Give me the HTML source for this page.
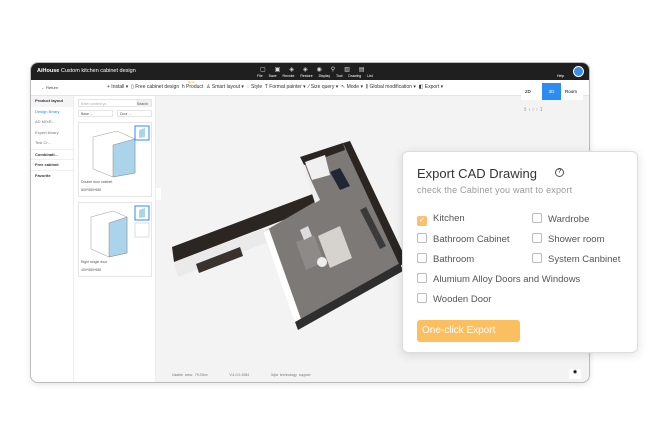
<!DOCTYPE html>
<html><head><style>
*{margin:0;padding:0;box-sizing:border-box}
body{width:660px;height:444px;background:#fff;font-family:"Liberation Sans",sans-serif;position:relative;overflow:hidden}
.frame{position:absolute;left:30px;top:62px;width:560px;height:321px;border:1px solid #bbb;border-radius:8px;overflow:hidden;background:#f3f3f3;box-shadow:0 2px 6px rgba(0,0,0,.1)}
.hdr{position:absolute;left:0;top:0;width:100%;height:17px;background:#1f1f1f;color:#fff}
.tb{position:absolute;left:0;top:17px;width:100%;height:16px;background:#fff;border-bottom:1px solid #e5e5e5;font-size:4px;color:#444}
.side{position:absolute;left:0;top:33px;width:43px;bottom:0;background:#fff;border-right:1px solid #eee;font-size:4px;color:#333}
.side div{height:10.5px;line-height:10.5px;padding-left:4px}
.panel{position:absolute;left:43px;top:33px;width:82px;bottom:0;background:#fff;border-right:1px solid #eee;font-size:3.5px;color:#555}
.t{position:absolute;white-space:nowrap}
.card{position:absolute;left:4px;width:74px;border:1px solid #e5e5e5;background:#fff}
.dlg{position:absolute;left:402px;top:151px;width:236px;height:202px;background:#fff;border:1px solid #ddd;border-radius:6px;box-shadow:0 2px 10px rgba(0,0,0,.12)}
.cb{position:absolute;font-size:9.5px;color:#555;white-space:nowrap}
.cb i{display:inline-block;width:10px;height:10px;border:1px solid #bbb;border-radius:2px;vertical-align:-1px;margin-right:6px;background:#fff}
</style></head><body>
<div class="frame">
 <div class="hdr">
  <span class="t" style="left:6px;top:5px;font-size:5.5px;font-weight:bold">AiHouse <span style="font-weight:normal">Custom kitchen cabinet design</span></span>
  <span class="t" style="left:226px;top:11px;font-size:3.5px;word-spacing:5px">File Save Revoke Restore Display Tool Drawing List</span>
  <span class="t" style="left:229px;top:3px;font-size:6px;letter-spacing:9px;color:#ddd">▢▣◈◈◉⚲▥▤</span>
  <span class="t" style="left:526px;top:11px;font-size:3.5px">Help</span>
  <div style="position:absolute;left:542px;top:3px;width:11px;height:11px;border-radius:50%;background:#3a8ee6;border:1px solid #fff"></div>
 </div>
 <div class="tb">
  <span class="t" style="left:10px;top:5px">← Return</span>
  <span class="t" style="left:76px;top:4px;font-size:5px;color:#333">+ Install ▾ &nbsp;▯ Free cabinet design &nbsp;h Product &nbsp;♙ Smart layout ▾ &nbsp;◌ Style &nbsp;T Format painter ▾ &nbsp;⁄ Size query ▾ &nbsp;↖ Mode ▾ &nbsp;⫼ Global modification ▾ &nbsp;◧ Export ▾</span>
  <span class="t" style="left:157px;top:0px;font-size:3px;color:#f5a623">New</span>
 </div>
 <div style="position:absolute;left:490px;top:20px;width:62px;height:17px;background:#fff;font-size:4.5px">
  <span class="t" style="left:4px;top:6px">2D</span>
  <div style="position:absolute;left:21px;top:0;width:19px;height:17px;background:#2d8cf0;color:#fff;text-align:center;line-height:17px">3D</div>
  <span class="t" style="left:44px;top:6px">Room</span>
 </div>
 <span class="t" style="left:492px;top:44px;font-size:5px;color:#999">↥ ‹ ○ › ↧</span>
 <div class="side">
  <div style="font-weight:bold;background:#f5f5f5">Product layout</div>
  <div style="color:#2d8cf0">Design library</div>
  <div style="color:#777">AD MIXR...</div>
  <div style="color:#777">Expert library</div>
  <div style="color:#777">Test Cr...</div>
  <div style="font-weight:bold;border-top:1px solid #eee">Combinati...</div>
  <div style="font-weight:bold;border-top:1px solid #eee">Free cabinet</div>
  <div style="font-weight:bold;border-top:1px solid #eee">Favorite</div>
 </div>
 <div class="panel">
  <div style="position:absolute;left:4px;top:3px;width:74px;height:8px;border:1px solid #e5e5e5"><span class="t" style="left:2px;top:1.5px;color:#aaa">Enter content yo</span><span class="t" style="right:0;top:0;height:7px;width:15px;background:#f0f0f0;padding:1.5px 1px">Search</span></div>
  <div style="position:absolute;left:4px;top:14px;width:35px;height:7px;border:1px solid #e5e5e5;padding:1px 2px">Base ...</div>
  <div style="position:absolute;left:43px;top:14px;width:35px;height:7px;border:1px solid #e5e5e5;padding:1px 2px">Door ...</div>
  <div class="card" style="top:26px;height:75px">
   <svg width="74" height="55" style="position:absolute;left:0;top:0"><polygon points="14,14 38,8 56,16 56,50 34,54 14,46" fill="#fff" stroke="#999" stroke-width=".5"/><polygon points="34,22 56,16 56,50 34,54" fill="#a9d4ea" stroke="#888" stroke-width=".5"/><rect x="56" y="3" width="14" height="14" fill="#fff" stroke="#2d8cf0"/><polygon points="60,7 66,5 66,14 60,15" fill="#a9d4ea"/></svg>
   <span class="t" style="left:2px;top:57px">Double door cabinet</span><span class="t" style="left:2px;top:65px">800*550*680</span>
  </div>
  <div class="card" style="top:106px;height:75px">
   <svg width="74" height="55" style="position:absolute;left:0;top:0"><polygon points="12,14 34,8 48,14 48,50 30,54 12,46" fill="#fff" stroke="#999" stroke-width=".5"/><polygon points="30,20 48,14 48,50 30,54" fill="#a9d4ea" stroke="#888" stroke-width=".5"/><rect x="56" y="3" width="14" height="14" fill="#fff" stroke="#2d8cf0"/><polygon points="60,7 66,5 66,14 60,15" fill="#a9d4ea"/><rect x="56" y="20" width="14" height="14" fill="#fff" stroke="#ddd"/></svg>
   <span class="t" style="left:2px;top:57px">Right single door</span><span class="t" style="left:2px;top:65px">400*550*680</span>
  </div>
 </div>
 <div style="position:absolute;left:125px;top:125px;width:5px;height:12px;background:#fff"></div>
 <span class="t" style="left:141px;top:310px;font-size:3.5px;color:#777;word-spacing:1px">Usable area: 79.33m² &nbsp;&nbsp;&nbsp;&nbsp;&nbsp;&nbsp;&nbsp;&nbsp;&nbsp; V:4.0.0.1084 &nbsp;&nbsp;&nbsp;&nbsp;&nbsp;&nbsp;&nbsp;&nbsp;&nbsp; 3vjia technology support</span>
 <div style="position:absolute;left:538px;top:306px;width:12px;height:10px;background:#fff;font-size:5px;text-align:center">◉</div>
</div>
<svg width="660" height="444" style="position:absolute;left:0;top:0">
 <polygon points="174,262 263,229 268,242 178,277" fill="#eaeaea"/>
 <polygon points="196,264 240,247 243,256 199,273" fill="#3a322d"/>
 <polygon points="172,247 318,192 320,206 174,262" fill="#2c2622"/>
 <polygon points="263,232 318,200 302,157 343,143 400,263 295,322" fill="#7d7977"/>
 <polygon points="300,157 343,143 345,150 304,165" fill="#2b2521"/>
 <polygon points="305,162 325,155 330,175 312,180" fill="#f0f0f0"/>
 <polygon points="343,143 350,141 407,261 400,266" fill="#2b2521"/>
 <polygon points="300,157 304,165 320,200 315,203" fill="#eee"/>
 <polygon points="263,232 269,229 301,319 295,323" fill="#fff"/>
 <polygon points="295,322 400,263 403,271 298,330" fill="#2e2e2e"/>
 <polygon points="318,236 340,226 352,258 330,268" fill="#d6d2cd"/>
 <polygon points="296,242 314,235 324,262 306,270" fill="#8e8a87"/>
 <circle cx="322" cy="262" r="5" fill="#eee"/>
 <polygon points="330,172 340,168 350,186 340,190" fill="#222533"/>
 <polygon points="360,210 366,207 386,246 380,249" fill="#3a3a3a"/>
 <polygon points="300,230 308,226 312,236 304,240" fill="#ddd"/>
</svg>
<div class="dlg">
 <span class="t" style="left:14px;top:14px;font-size:13px;color:#333">Export CAD Drawing</span>
 <span class="t" style="left:152px;top:16px;width:9px;height:9px;border:1px solid #555;border-radius:50%;font-size:6px;text-align:center;line-height:7px">?</span>
 <span class="t" style="left:14px;top:33px;font-size:9px;color:#999;letter-spacing:.2px">check the Cabinet you want to export</span>
 <div class="cb" style="left:14px;top:61px"><i style="background:#f8c070;border-color:#f8c070;color:#fff;font-size:7px;font-style:normal;text-align:center;line-height:8px">✓</i>Kitchen</div>
 <div class="cb" style="left:129px;top:61px"><i></i>Wardrobe</div>
 <div class="cb" style="left:14px;top:81px"><i></i>Bathroom Cabinet</div>
 <div class="cb" style="left:129px;top:81px"><i></i>Shower room</div>
 <div class="cb" style="left:14px;top:101px"><i></i>Bathroom</div>
 <div class="cb" style="left:129px;top:101px"><i></i>System Canbinet</div>
 <div class="cb" style="left:14px;top:121px"><i></i>Alumium Alloy Doors and Windows</div>
 <div class="cb" style="left:14px;top:141px"><i></i>Wooden Door</div>
 <div style="position:absolute;left:14px;top:168px;width:103px;height:22px;background:#fbbf60;border-radius:3px;color:#fff;font-size:10px;line-height:22px;padding-left:5px">One-click Export</div>
</div>
</body></html>
